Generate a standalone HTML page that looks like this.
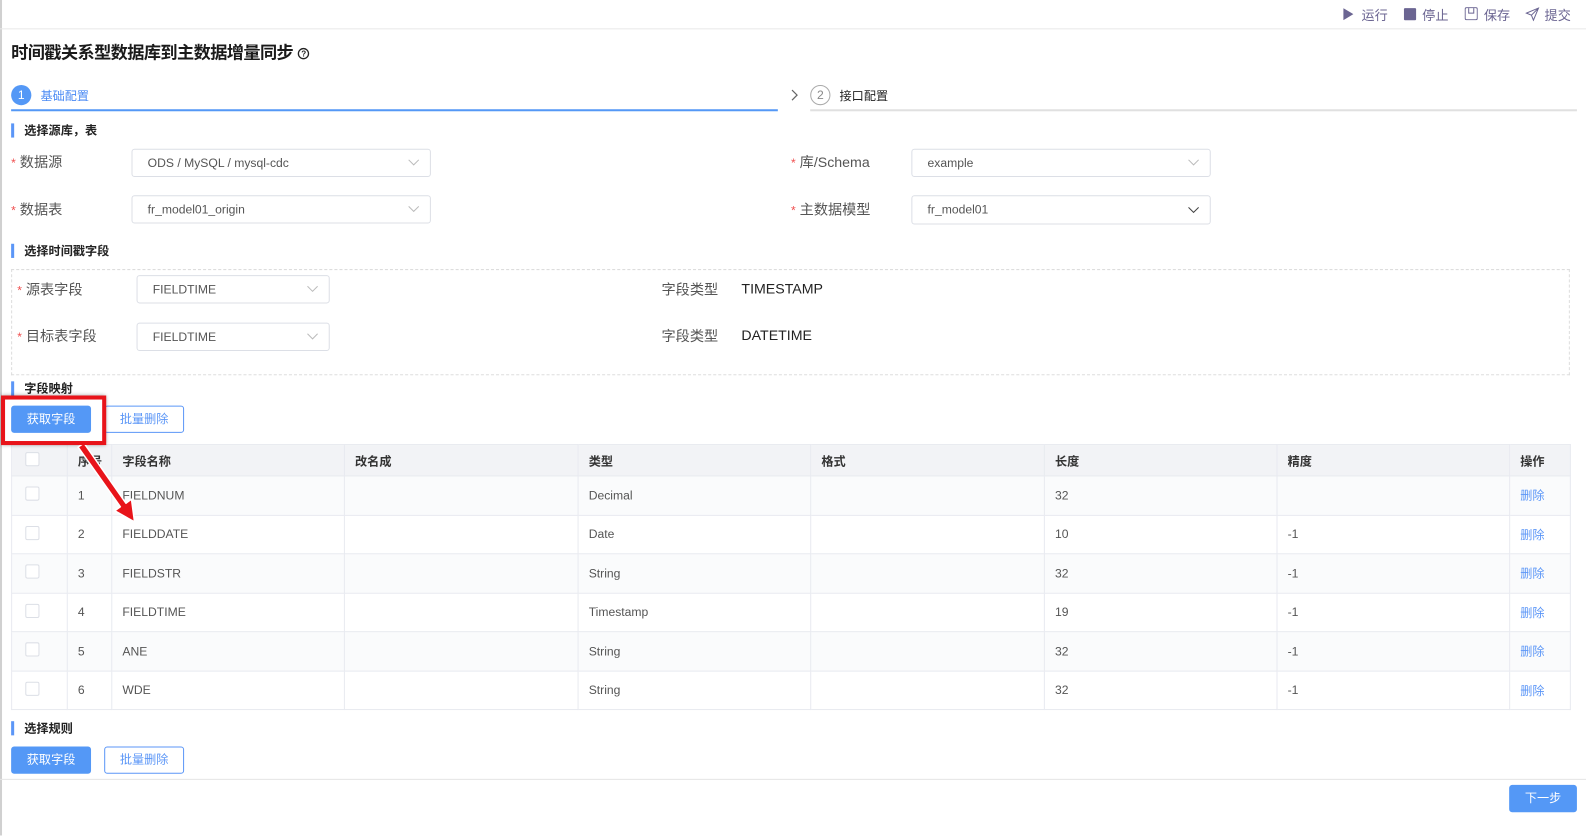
<!DOCTYPE html>
<html><head><meta charset="utf-8"><style>
*{box-sizing:border-box;margin:0;padding:0}
html,body{width:1586px;height:826px;overflow:hidden;background:#fff}
#w{position:absolute;left:0;top:0;width:1568px;height:817px;transform:scale(1.0115);transform-origin:0 0;font-family:"Liberation Sans","Noto Sans CJK SC",sans-serif;font-size:13px;color:#333}
.a{position:absolute;white-space:nowrap}
.top{position:absolute;left:0;top:0;width:1568px;height:29px;border-bottom:1px solid #e8e8e8}
.tb{color:#6b6592;font-size:13px}
.sec{position:absolute;left:11px;height:14px;border-left:3px solid #5b96f7;padding-left:10px;font-size:12px;font-weight:bold;color:#222;line-height:14px}
.lbl{color:#555;font-size:14px}
.star{color:#f05050;font-size:12px}
.sel{position:absolute;border:1px solid #dcdfe6;border-radius:3px;background:#fff;color:#555;font-size:12px;padding-left:15px}
.sel svg{position:absolute;right:10px;top:50%;margin-top:-4px}
.btn{position:absolute;height:27px;border-radius:3px;font-size:12px;text-align:center;line-height:27px}
.bp{background:#5498f6;color:#fff}
.bo{border:1px solid #5b96f7;color:#5b96f7;background:#fff;line-height:25px}
table{position:absolute;left:11px;top:439px;border-collapse:collapse;font-size:12px;color:#555}
td,th{border:1px solid #e8eaf0;height:38.5px;padding-left:10px;text-align:left;vertical-align:middle}
th{background:#f2f3f6;height:31px;font-weight:bold;color:#333}
tr:nth-child(even) td{background:#fafbfc}
.cb{display:inline-block;width:14px;height:14px;border:1px solid #dcdfe6;border-radius:2px;background:#fff;margin-left:3px}
.del{color:#5b96f7}
</style></head><body><div id="w">
<div class="a" style="left:0;top:0;width:2px;height:826px;background:#d0d0d0"></div>
<div class="top">
<svg class="a" style="left:1328px;top:8px" width="10" height="12"><path d="M0 0L10 6L0 12Z" fill="#6b6592"/></svg>
<span class="a tb" style="left:1346px;top:5px">运行</span>
<div class="a" style="left:1388px;top:8px;width:12px;height:12px;background:#6b6592;border-radius:1px"></div>
<span class="a tb" style="left:1406px;top:5px">停止</span>
<svg class="a" style="left:1448px;top:7px" width="13" height="13"><rect x="0.5" y="0.5" width="12" height="12" rx="1.5" fill="none" stroke="#6b6592"/><path d="M4 1V6H9V1" fill="none" stroke="#6b6592"/></svg>
<span class="a tb" style="left:1467px;top:5px">保存</span>
<svg class="a" style="left:1508px;top:7px" width="14" height="14"><path d="M13 1L1 6L6 8L8 13Z M6 8L13 1" fill="none" stroke="#6b6592"/></svg>
<span class="a tb" style="left:1527px;top:5px">提交</span>
</div>
<div class="a" style="left:11px;top:38px;font-size:17px;font-weight:bold;color:#1a1a1a;letter-spacing:-0.6px">时间戳关系型数据库到主数据增量同步 <svg style="vertical-align:-1px" width="12" height="12"><circle cx="6" cy="6" r="5" fill="none" stroke="#222" stroke-width="1.3"/><text x="6" y="9" font-size="8" text-anchor="middle" fill="#222" font-family="Liberation Sans">?</text></svg></div>
<div class="a" style="left:11px;top:84px;width:20px;height:20px;border-radius:50%;background:#5498f6;color:#fff;text-align:center;line-height:20px;font-size:12px">1</div>
<span class="a" style="left:40px;top:86px;color:#4a8af4;font-size:12px">基础配置</span>
<div class="a" style="left:11px;top:108px;width:758px;height:2px;background:#5498f6"></div>
<svg class="a" style="left:781px;top:88px" width="8" height="12"><path d="M2 1L7 6L2 11" fill="none" stroke="#666" stroke-width="1.2"/></svg>
<div class="a" style="left:801px;top:84px;width:20px;height:20px;border-radius:50%;border:1px solid #aaa;color:#888;text-align:center;line-height:18px;font-size:12px">2</div>
<span class="a" style="left:830px;top:86px;color:#222;font-size:12px">接口配置</span>
<div class="a" style="left:801px;top:108px;width:758px;height:2px;background:#e0e0e0"></div>

<div class="sec" style="top:122px">选择源库，表</div>
<span class="a lbl" style="left:11px;top:150px"><span class="star">*</span> 数据源</span>
<div class="sel" style="left:130px;top:147px;width:296px;height:28px;line-height:26px">ODS / MySQL / mysql-cdc<svg width="12" height="8"><path d="M1 1L6 6L11 1" fill="none" stroke="#bbb"/></svg></div>
<span class="a lbl" style="left:782px;top:150px"><span class="star">*</span> 库/Schema</span>
<div class="sel" style="left:901px;top:147px;width:296px;height:28px;line-height:26px">example<svg width="12" height="8"><path d="M1 1L6 6L11 1" fill="none" stroke="#bbb"/></svg></div>
<span class="a lbl" style="left:11px;top:197px"><span class="star">*</span> 数据表</span>
<div class="sel" style="left:130px;top:193px;width:296px;height:28px;line-height:26px">fr_model01_origin<svg width="12" height="8"><path d="M1 1L6 6L11 1" fill="none" stroke="#bbb"/></svg></div>
<span class="a lbl" style="left:782px;top:197px"><span class="star">*</span> 主数据模型</span>
<div class="sel" style="left:901px;top:193px;width:296px;height:29px;line-height:27px">fr_model01<svg width="12" height="8"><path d="M1 1L6 6L11 1" fill="none" stroke="#444"/></svg></div>

<div class="sec" style="top:241px">选择时间戳字段</div>
<div class="a" style="left:11px;top:266px;width:1541px;height:105px;border:1px dashed #ddd"></div>
<span class="a lbl" style="left:17px;top:276px"><span class="star">*</span> 源表字段</span>
<div class="sel" style="left:135px;top:272px;width:191px;height:28px;line-height:26px">FIELDTIME<svg width="12" height="8"><path d="M1 1L6 6L11 1" fill="none" stroke="#bbb"/></svg></div>
<span class="a lbl" style="left:654px;top:276px">字段类型</span>
<span class="a" style="left:733px;top:277px;font-size:14px;color:#222">TIMESTAMP</span>
<span class="a lbl" style="left:17px;top:322px"><span class="star">*</span> 目标表字段</span>
<div class="sel" style="left:135px;top:319px;width:191px;height:28px;line-height:26px">FIELDTIME<svg width="12" height="8"><path d="M1 1L6 6L11 1" fill="none" stroke="#bbb"/></svg></div>
<span class="a lbl" style="left:654px;top:322px">字段类型</span>
<span class="a" style="left:733px;top:323px;font-size:14px;color:#222">DATETIME</span>

<div class="sec" style="top:377px">字段映射</div>
<div class="btn bp" style="left:11px;top:401px;width:79px">获取字段</div>
<div class="btn bo" style="left:103px;top:401px;width:79px">批量删除</div>

<table>
<tr><th style="width:55px"><span class="cb"></span></th><th style="width:44px">序号</th><th style="width:230px">字段名称</th><th style="width:231px">改名成</th><th style="width:230px">类型</th><th style="width:231px">格式</th><th style="width:230px">长度</th><th style="width:230px">精度</th><th style="width:60px">操作</th></tr>
<tr><td><span class="cb"></span></td><td>1</td><td>FIELDNUM</td><td></td><td>Decimal</td><td></td><td>32</td><td></td><td class="del">删除</td></tr>
<tr><td><span class="cb"></span></td><td>2</td><td>FIELDDATE</td><td></td><td>Date</td><td></td><td>10</td><td>-1</td><td class="del">删除</td></tr>
<tr><td><span class="cb"></span></td><td>3</td><td>FIELDSTR</td><td></td><td>String</td><td></td><td>32</td><td>-1</td><td class="del">删除</td></tr>
<tr><td><span class="cb"></span></td><td>4</td><td>FIELDTIME</td><td></td><td>Timestamp</td><td></td><td>19</td><td>-1</td><td class="del">删除</td></tr>
<tr><td><span class="cb"></span></td><td>5</td><td>ANE</td><td></td><td>String</td><td></td><td>32</td><td>-1</td><td class="del">删除</td></tr>
<tr><td><span class="cb"></span></td><td>6</td><td>WDE</td><td></td><td>String</td><td></td><td>32</td><td>-1</td><td class="del">删除</td></tr>
</table>

<div class="a" style="left:1px;top:391px;width:104px;height:49px;border:4px solid #e8141a;box-shadow:0 0 4px rgba(0,0,0,.4)"></div>
<svg class="a" style="left:75px;top:440px" width="70" height="80"><path d="M2.2 2L8 -2L49.5 57.5L55 53.5L58 76L38.5 65L44 61Z" fill="#e8141a" stroke="#fff" stroke-width="1.5" stroke-linejoin="round"/></svg>

<div class="sec" style="top:713px">选择规则</div>
<div class="btn bp" style="left:11px;top:738px;width:79px">获取字段</div>
<div class="btn bo" style="left:103px;top:738px;width:79px">批量删除</div>
<div class="a" style="left:0;top:770px;width:1568px;height:1px;background:#e4e4e4"></div>
<div class="btn bp" style="left:1492px;top:776px;width:67px">下一步</div>
</div></body></html>
